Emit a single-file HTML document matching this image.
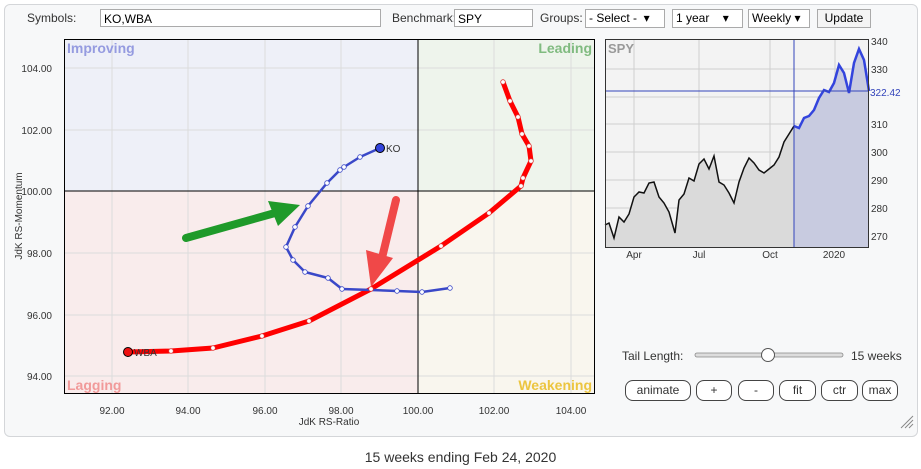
<!DOCTYPE html>
<html><head><meta charset="utf-8"><style>
body{margin:0;width:921px;height:469px;background:#fff;font-family:"Liberation Sans",Arial,sans-serif;overflow:hidden;position:relative}
.panel{position:absolute;left:4px;top:4px;width:912px;height:431px;border:1px solid #d4d6d9;border-radius:6px;background:#f7f8f9}
.t{position:absolute;font-size:12px;color:#333}
.inp{position:absolute;height:18px;border:1px solid #aaa;background:#fff;font-size:12px;line-height:18px;padding-left:3px;box-sizing:border-box}
.sel{position:absolute;height:19px;border:1px solid #aaa;background:#fff;font-size:12px;line-height:17px;padding-left:3px;box-sizing:border-box}
.btn{position:absolute;top:380px;height:21px;border:1px solid #444;border-radius:8px;background:#fff;font-size:12px;text-align:center;line-height:19px;box-sizing:border-box;color:#333}
</style></head><body>
<div class="panel"></div>
<div class="t" style="left:27px;top:11px">Symbols:</div>
<div class="inp" style="left:100px;top:9px;width:281px">KO,WBA</div>
<div class="t" style="left:392px;top:11px">Benchmark:</div>
<div class="inp" style="left:454px;top:9px;width:79px">SPY</div>
<div class="t" style="left:540px;top:11px">Groups:</div>
<div class="sel" style="left:585px;top:9px;width:80px">- Select - &nbsp;▾</div>
<div class="sel" style="left:672px;top:9px;width:71px">1 year &nbsp;&nbsp;&nbsp;▾</div>
<div class="sel" style="left:748px;top:9px;width:62px">Weekly ▾</div>
<div class="sel" style="left:817px;top:9px;width:54px;background:#f4f4f4;text-align:center;padding:0">Update</div>
<svg style="position:absolute;left:0;top:0" width="921" height="469" font-family="Liberation Sans, Arial, sans-serif">
<rect x="64" y="39" width="354" height="152" fill="#eef0f8"/>
<rect x="418" y="39" width="177" height="152" fill="#eef4ec"/>
<rect x="64" y="191" width="354" height="203" fill="#f9ecec"/>
<rect x="418" y="191" width="177" height="203" fill="#f9f6ee"/>
<g stroke="#dcdcdc" stroke-width="1">
<line x1="112" y1="39" x2="112" y2="394"/><line x1="188" y1="39" x2="188" y2="394"/><line x1="265" y1="39" x2="265" y2="394"/><line x1="341" y1="39" x2="341" y2="394"/><line x1="494" y1="39" x2="494" y2="394"/><line x1="571" y1="39" x2="571" y2="394"/>
<line x1="64" y1="68" x2="595" y2="68"/><line x1="64" y1="130" x2="595" y2="130"/><line x1="64" y1="253" x2="595" y2="253"/><line x1="64" y1="315" x2="595" y2="315"/><line x1="64" y1="376" x2="595" y2="376"/>
</g>
<line x1="418" y1="39" x2="418" y2="394" stroke="#000"/>
<line x1="64" y1="191" x2="595" y2="191" stroke="#000"/>
<rect x="64.5" y="39.5" width="530" height="354" fill="none" stroke="#000"/>
<g font-size="14" font-weight="bold">
<text x="67" y="53" fill="#959be0">Improving</text>
<text x="592" y="53" fill="#80bb80" text-anchor="end">Leading</text>
<text x="67" y="390" fill="#f19a9a">Lagging</text>
<text x="592" y="390" fill="#ecc540" text-anchor="end">Weakening</text>
</g>
<g font-size="10" fill="#333" text-anchor="end">
<text x="52" y="72">104.00</text><text x="52" y="134">102.00</text><text x="52" y="195">100.00</text><text x="52" y="257">98.00</text><text x="52" y="319">96.00</text><text x="52" y="380">94.00</text>
</g>
<g font-size="10" fill="#333" text-anchor="middle">
<text x="112" y="414">92.00</text><text x="188" y="414">94.00</text><text x="265" y="414">96.00</text><text x="341" y="414">98.00</text><text x="418" y="414">100.00</text><text x="494" y="414">102.00</text><text x="571" y="414">104.00</text>
<text x="329" y="425">JdK RS-Ratio</text>
<text transform="translate(22,216) rotate(-90)">JdK RS-Momentum</text>
</g>
<polyline fill="none" stroke="#ff0000" stroke-width="5" stroke-linejoin="round" points="503,82 510,101 518,117 522,134 529,146 531,161 523,178 521,186 489,213 441,246 371,289 309,321 262,336 213,348 171,351 128,352"/>
<polyline fill="none" stroke="#3a48c8" stroke-width="2.5" stroke-linejoin="round" points="450,288 422,292 397,291 371,290 342,289 328,278 305,272 293,260 286,247 295,227 308,206 327,183 340,170 344,167 360,157 380,148"/>
<g fill="#fff" stroke="#d33" stroke-width="0.8">
<circle cx="503" cy="82" r="2.3"/><circle cx="510" cy="101" r="2.3"/><circle cx="518" cy="117" r="2.3"/><circle cx="522" cy="134" r="2.3"/><circle cx="529" cy="146" r="2.3"/><circle cx="531" cy="161" r="2.3"/><circle cx="523" cy="178" r="2.3"/><circle cx="521" cy="186" r="2.3"/><circle cx="489" cy="213" r="2.3"/><circle cx="441" cy="246" r="2.3"/><circle cx="371" cy="289" r="2.3"/><circle cx="309" cy="321" r="2.3"/><circle cx="262" cy="336" r="2.3"/><circle cx="213" cy="348" r="2.3"/><circle cx="171" cy="351" r="2.3"/>
</g>
<g fill="#fff" stroke="#3a48c8" stroke-width="0.8">
<circle cx="450" cy="288" r="2.3"/><circle cx="422" cy="292" r="2.3"/><circle cx="397" cy="291" r="2.3"/><circle cx="342" cy="289" r="2.3"/><circle cx="328" cy="278" r="2.3"/><circle cx="305" cy="272" r="2.3"/><circle cx="293" cy="260" r="2.3"/><circle cx="286" cy="247" r="2.3"/><circle cx="295" cy="227" r="2.3"/><circle cx="308" cy="206" r="2.3"/><circle cx="327" cy="183" r="2.3"/><circle cx="340" cy="170" r="2.3"/><circle cx="344" cy="167" r="2.3"/><circle cx="360" cy="157" r="2.3"/>
</g>
<circle cx="380" cy="148" r="4.5" fill="#3344dd" stroke="#000"/>
<text x="386" y="152" font-size="10" fill="#333">KO</text>
<circle cx="128" cy="352" r="4.5" fill="#ee1111" stroke="#000"/>
<text x="134" y="356" font-size="10" fill="#333">WBA</text>
<!-- green arrow -->
<line x1="186" y1="238" x2="275" y2="213" stroke="#1f9a2a" stroke-width="8" stroke-linecap="round"/>
<polygon points="268,201 300,205 278,226" fill="#1f9a2a"/>
<!-- red arrow -->
<line x1="396" y1="200" x2="381" y2="262" stroke="#f04848" stroke-width="8" stroke-linecap="round"/>
<polygon points="366,250 393,258 371,287" fill="#f04848"/>
<!-- SPY chart -->
<rect x="605" y="39" width="264" height="209" fill="#f3f3f3"/>
<g stroke="#cfcfcf"><line x1="634" y1="39" x2="634" y2="248"/><line x1="699" y1="39" x2="699" y2="248"/><line x1="770" y1="39" x2="770" y2="248"/><line x1="835" y1="39" x2="835" y2="248"/>
<line x1="605" y1="69" x2="869" y2="69"/><line x1="605" y1="97" x2="869" y2="97"/><line x1="605" y1="124" x2="869" y2="124"/><line x1="605" y1="152" x2="869" y2="152"/><line x1="605" y1="180" x2="869" y2="180"/><line x1="605" y1="208" x2="869" y2="208"/><line x1="605" y1="236" x2="869" y2="236"/></g>
<polygon fill="#dadada" points="605,248 605,225 609,223 614,238 619,217 624,222 629,214 634,197 639,192 644,193 649,183 654,182 659,197 664,203 669,212 675,233 679,200 684,194 689,178 694,181 699,164 704,159 709,169 714,156 719,182 724,185 729,193 734,203 739,182 744,168 749,158 754,163 759,170 764,173 769,169 774,165 779,157 784,142 789,134 794,126 794,248"/>
<polygon fill="#c8cbe0" points="794,248 794,126 799,128 804,118 809,116 814,110 819,98 824,90 829,92 834,83 839,65 844,73 849,93 854,63 859,49 864,60 869,91 869,248"/>
<polyline fill="none" stroke="#111" stroke-width="1.5" points="605,225 609,223 614,238 619,217 624,222 629,214 634,197 639,192 644,193 649,183 654,182 659,197 664,203 669,212 675,233 679,200 684,194 689,178 694,181 699,164 704,159 709,169 714,156 719,182 724,185 729,193 734,203 739,182 744,168 749,158 754,163 759,170 764,173 769,169 774,165 779,157 784,142 789,134 794,126"/>
<polyline fill="none" stroke="#3344dd" stroke-width="2.5" points="794,126 799,128 804,118 809,116 814,110 819,98 824,90 829,92 834,83 839,65 844,73 849,93 854,63 859,49 864,60 869,91"/>
<line x1="794" y1="39" x2="794" y2="248" stroke="#3344bb"/>
<line x1="605" y1="91" x2="869" y2="91" stroke="#3344bb"/>
<rect x="605.5" y="39.5" width="263" height="208" fill="none" stroke="#333"/>
<text x="608" y="53" font-size="13" font-weight="bold" fill="#999">SPY</text>
<g font-size="10" fill="#333">
<text x="871" y="45">340</text><text x="871" y="73">330</text><text x="871" y="128">310</text><text x="871" y="156">300</text><text x="871" y="184">290</text><text x="871" y="212">280</text><text x="871" y="240">270</text>
<text x="870" y="96" fill="#3344bb">322.42</text>
</g>
<g font-size="10" fill="#333" text-anchor="middle"><text x="634" y="258">Apr</text><text x="699" y="258">Jul</text><text x="770" y="258">Oct</text><text x="834" y="258">2020</text></g>
<!-- slider -->
<rect x="695" y="353" width="148" height="4" rx="2" fill="#ddd" stroke="#888" stroke-width="0.8"/>
<circle cx="768" cy="355" r="6.5" fill="#fff" stroke="#555"/>
<g stroke="#888" stroke-width="1"><line x1="901" y1="428" x2="913" y2="416"/><line x1="905" y1="428" x2="913" y2="420"/><line x1="909" y1="428" x2="913" y2="424"/></g>
</svg>
<div class="t" style="left:622px;top:349px">Tail Length:</div>
<div class="t" style="left:851px;top:349px">15 weeks</div>
<div class="btn" style="left:625px;width:66px">animate</div>
<div class="btn" style="left:696px;width:36px">+</div>
<div class="btn" style="left:738px;width:36px">-</div>
<div class="btn" style="left:779px;width:37px">fit</div>
<div class="btn" style="left:821px;width:37px">ctr</div>
<div class="btn" style="left:862px;width:36px">max</div>
<div style="position:absolute;left:0;width:921px;top:449px;text-align:center;font-size:14px;color:#333">15 weeks ending Feb 24, 2020</div>
</body></html>
